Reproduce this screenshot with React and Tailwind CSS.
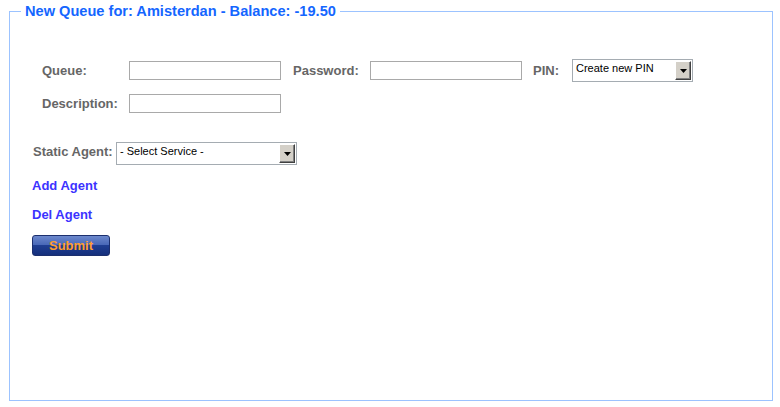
import React from "react";

function Input() {
  return <div className="w-[152px] h-[19px] border border-[#a9a9a9] bg-white" />;
}

function Select({ width, text }) {
  return (
    <div className={`flex items-start h-[23px] border border-[#a5acb2] bg-white ${width}`}>
      <span className="flex-1 pl-[3px] pt-[1px] text-[11px] leading-[14px] font-normal text-black whitespace-nowrap">{text}</span>
      <div className="mt-[1px] mr-[1px] w-[16px] h-[19px] bg-[#d4d0c8] border-t border-l border-t-white border-l-white border-r border-b border-r-[#404040] border-b-[#404040] shadow-[inset_-1px_-1px_0_#808080] flex items-center justify-center">
        <svg width="7" height="4" viewBox="0 0 7 4">
          <polygon points="0,0 7,0 3.5,4" fill="#000" />
        </svg>
      </div>
    </div>
  );
}

export default function App() {
  return (
    <div className="w-[780px] h-[407px] bg-white pt-[3px] pl-[9px] font-['Liberation_Sans',Arial,sans-serif]">
      <fieldset className="w-[764px] h-[398px] border border-[#9cc3ff] m-0 p-0">
        <legend className="ml-[11px] px-[4px] text-[14.6px] leading-[16px] font-bold text-[#1466ff]">
          New Queue for: Amisterdan - Balance: -19.50
        </legend>

        <div className="flex items-center mt-[40px] pl-[32px] h-[23px] text-[13px] font-bold text-[#666666]">
          <span className="w-[87px]">Queue:</span>
          <Input />
          <span className="ml-[12px] w-[77px]">Password:</span>
          <Input />
          <span className="ml-[11px] w-[39px]">PIN:</span>
          <Select width="w-[121px]" text="Create new PIN" />
        </div>

        <div className="flex items-center mt-[12px] pl-[32px] h-[19px] text-[13px] font-bold text-[#666666]">
          <span className="w-[87px]">Description:</span>
          <Input />
        </div>

        <div className="flex items-center mt-[29px] pl-[23px] h-[23px] text-[13px] font-bold text-[#666666]">
          <span className="w-[83px] -mt-[3px]">Static Agent:</span>
          <Select width="w-[181px]" text="- Select Service -" />
        </div>

        <div className="mt-[13px] pl-[22px] text-[13px] leading-[15px] font-bold text-[#3c33ff]">Add Agent</div>
        <div className="mt-[14px] pl-[22px] text-[13px] leading-[15px] font-bold text-[#3c33ff]">Del Agent</div>

        <div className="mt-[13px] pl-[22px]">
          <div className="w-[78px] h-[21px] rounded-[3px] border border-[#1c2f6e] bg-[linear-gradient(to_bottom,#6c88cc_0%,#4a69b8_45%,#1f3e92_50%,#15307c_100%)] flex items-center justify-center text-[13px] font-bold text-[#ff9d2e] leading-none">
            Submit
          </div>
        </div>
      </fieldset>
    </div>
  );
}
